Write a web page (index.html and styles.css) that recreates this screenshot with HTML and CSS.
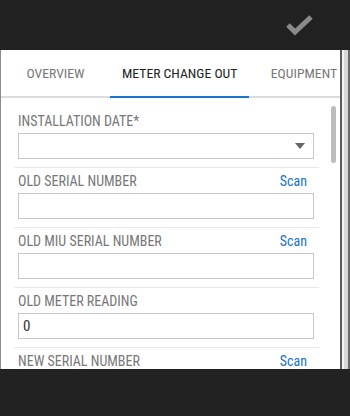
FILE: index.html
```html
<!DOCTYPE html>
<html lang="en">
<head>
    <meta charset="UTF-8">
    <meta name="viewport" content="width=device-width, initial-scale=1.0">
    <title>Meter Change Out</title>
    <link rel="stylesheet" href="styles.css">
</head>
<body>
    <header class="topbar">
        <svg class="done-icon" width="30" height="24" viewBox="0 0 30 24">
            <path d="M3 11 L10 18 L26 3" fill="none" stroke="#8a8a8a" stroke-width="5"/>
        </svg>
    </header>

    <div class="frame">
        <div class="panel">
            <ul class="tabs">
                <li class="tab">Overview</li>
                <li class="tab active">Meter Change Out</li>
                <li class="tab">Equipment</li>
            </ul>

            <div class="content">
                <div class="field">
                    <div class="field-label"><span>Installation Date*</span></div>
                    <div class="input select"><span class="caret"></span></div>
                </div>
                <div class="field">
                    <div class="field-label"><span>Old Serial Number</span><a href="#" class="scan">Scan</a></div>
                    <div class="input"></div>
                </div>
                <div class="field">
                    <div class="field-label"><span>Old MIU Serial Number</span><a href="#" class="scan">Scan</a></div>
                    <div class="input"></div>
                </div>
                <div class="field">
                    <div class="field-label"><span>Old Meter Reading</span></div>
                    <div class="input">0</div>
                </div>
                <div class="field">
                    <div class="field-label"><span>New Serial Number</span><a href="#" class="scan">Scan</a></div>
                    <div class="input"></div>
                </div>

                <div class="scrollbar"></div>
            </div>
        </div>
        <div class="edge"></div>
    </div>
</body>
</html>
```

FILE: styles.css
```css
body {
    margin: 0;
    padding: 0;
    font-family: "Roboto Condensed", Roboto, "Liberation Sans", sans-serif;
    font-stretch: condensed;
    background-color: #222;
    height: 416px;
    overflow: hidden;
}

/* Top bar */
.topbar {
    height: 50px;
    background-color: #212121;
    display: flex;
    justify-content: flex-end;
    align-items: center;
}

.done-icon {
    margin-right: 35px;
    margin-top: 1px;
}

/* Sheet */
.frame {
    display: flex;
    height: 319px;
}

.panel {
    width: 339px;
    background-color: #fff;
    border-left: 1px solid #8c8c8c;
    border-right: 2px solid #5c5c5c;
    display: flex;
    flex-direction: column;
    overflow: hidden;
}

.edge {
    flex: 1;
    background-color: #d8d8d8;
    border-left: 2px solid #f4f4f4;
    border-right: 2px solid #6a6a6a;
}

/* Tabs */
.tabs {
    list-style-type: none;
    margin: 0;
    padding: 0;
    display: flex;
    height: 46px;
    border-bottom: 2px solid #dcdcdc;
    flex-shrink: 0;
}

.tab {
    min-width: 109px;
    box-sizing: border-box;
    padding: 0 12px;
    display: flex;
    align-items: center;
    justify-content: center;
    text-transform: uppercase;
    font-size: 13.7px;
    color: #777;
    white-space: nowrap;
    flex-shrink: 0;
    position: relative;
}

.tab.active {
    color: #222;
}

.tab.active::after {
    content: "";
    position: absolute;
    left: 0;
    right: 0;
    bottom: -2px;
    height: 2px;
    background-color: #1976d2;
}

/* Form */
.content {
    position: relative;
    flex: 1;
    overflow: hidden;
    padding: 10px 0 0 13px;
}

.field {
    width: 305px;
    box-sizing: border-box;
    padding: 0 5px 8px 4px;
    border-bottom: 1px solid #e8e8e8;
}

.field-label {
    height: 25px;
    display: flex;
    justify-content: space-between;
    align-items: center;
    padding-right: 7px;
    text-transform: uppercase;
    font-size: 14px;
    color: #777;
}

.scan {
    text-decoration: none;
    text-transform: none;
    color: #1a73c8;
    font-size: 14px;
}

.input {
    height: 26px;
    box-sizing: border-box;
    border: 1px solid #c8c8c8;
    padding: 0 4px;
    display: flex;
    align-items: center;
    font-size: 15px;
    color: #333;
}

.select {
    justify-content: flex-end;
    padding-right: 8px;
}

.caret {
    width: 0;
    height: 0;
    border-left: 5px solid transparent;
    border-right: 5px solid transparent;
    border-top: 6px solid #666;
}

.scrollbar {
    position: absolute;
    top: 8px;
    right: 4px;
    width: 5px;
    height: 57px;
    border-radius: 3px;
    background-color: #bdbdbd;
}
```
